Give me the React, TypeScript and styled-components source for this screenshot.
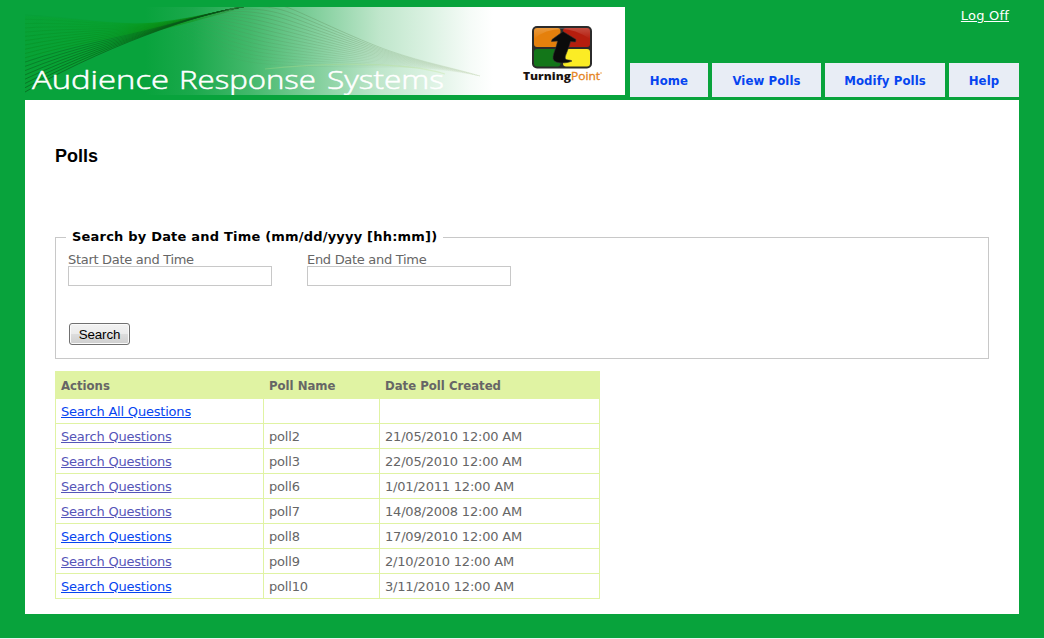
import React from "react";
import styled, { createGlobalStyle } from "styled-components";

const GREEN = "#08a33c";
const LIME = "#e0f3a3";
const CONDENSED = '"DejaVu Sans Condensed", "DejaVu Sans", sans-serif';

const GlobalStyle = createGlobalStyle`
  * { box-sizing: border-box; }
  html { background: #f0f0f0; }
  body {
    margin: 0;
    color: #666;
    font: 13px/16px Verdana, "DejaVu Sans", sans-serif;
    overflow: hidden;
  }
`;

const Page = styled.div`
  height: 638px;
  padding: 7px 25px 24px;
  background: ${GREEN};
  display: flex;
  flex-direction: column;
`;

const Header = styled.header`
  display: flex;
  height: 93px;
`;

const Banner = styled.svg`
  display: block;
  width: 600px;
  height: 88px;
  flex: none;
`;

const HeaderSide = styled.div`
  flex: 1;
  display: flex;
  flex-direction: column;
  justify-content: space-between;
  align-items: flex-end;
  padding-bottom: 3px;
`;

const LogOff = styled.a`
  color: #fff;
  margin-right: 10px;
  margin-top: 1px;
  letter-spacing: 0.2px;
  text-decoration: underline;
`;

const Nav = styled.nav`
  display: flex;
  gap: 4px;
`;

const Tab = styled.a<{ $w: number }>`
  width: ${(p) => p.$w}px;
  height: 34px;
  padding-top: 1px;
  background: #e8edf5;
  color: #0645f0;
  font: bold 13px/34px ${CONDENSED};
  font-stretch: condensed;
  letter-spacing: 0.1px;
  text-align: center;
  white-space: nowrap;
`;

const Content = styled.main`
  flex: 1;
  background: #fff;
  padding: 46px 30px 0;
`;

const Title = styled.h1`
  margin: 0 0 63px;
  color: #000;
  font: bold 18px/20px "Liberation Sans", Arial, sans-serif;
`;

const SearchBox = styled.fieldset`
  margin: 0 0 12px;
  padding: 0 12px;
  height: 130px;
  border: 1px solid #c8c8c8;
`;

const Legend = styled.legend`
  margin-left: -2px;
  padding: 0 6px;
  width: 377px;
  height: 16px;
  color: #000;
  font-weight: bold;
  letter-spacing: 0.2px;
  white-space: nowrap;
`;

const Fields = styled.div`
  display: flex;
  gap: 35px;
  margin-top: 8px;
`;

const Field = styled.label`
  display: flex;
  flex-direction: column;
  width: 204px;
  line-height: 13px;
  letter-spacing: -0.3px;
`;

const Input = styled.input`
  height: 20px;
  border: 1px solid #c8c8c8;
  background: #fff;
  padding: 1px 4px;
  margin: 0;
  outline: none;
`;

const Button = styled.button`
  display: block;
  width: 61px;
  height: 22px;
  margin: 37px 0 0 1px;
  padding: 1px 0 0;
  border: 1px solid #707070;
  border-radius: 3px;
  box-shadow: inset 0 0 0 1px #fafafa;
  background: linear-gradient(#f2f2f2, #ebebeb 50%, #dddddd 50%, #cfcfcf);
  color: #000;
  font: 13.33px/19px "Liberation Sans", Arial, sans-serif;
  letter-spacing: -0.1px;
`;

const Table = styled.table`
  width: 545px;
  table-layout: fixed;
  border-collapse: separate;
  border-spacing: 0;
  border-left: 1px solid ${LIME};
  letter-spacing: -0.2px;
`;

const Th = styled.th<{ $w: number }>`
  width: ${(p) => p.$w}px;
  height: 28px;
  padding: 1px 5px 0;
  background: ${LIME};
  font: bold 13px/16px ${CONDENSED};
  font-stretch: condensed;
  letter-spacing: 0;
  text-align: left;
`;

const Td = styled.td`
  height: 25px;
  padding: 2px 5px 0;
  border-right: 1px solid ${LIME};
  border-bottom: 1px solid ${LIME};
`;

const Action = styled.a<{ $visited?: boolean }>`
  color: ${(p) => (p.$visited ? "#5555b8" : "#0645f0")};
  text-decoration: underline;
`;

const rows = [
  { name: "poll2", date: "21/05/2010 12:00 AM", visited: true },
  { name: "poll3", date: "22/05/2010 12:00 AM", visited: true },
  { name: "poll6", date: "1/01/2011 12:00 AM", visited: true },
  { name: "poll7", date: "14/08/2008 12:00 AM", visited: true },
  { name: "poll8", date: "17/09/2010 12:00 AM", visited: false },
  { name: "poll9", date: "2/10/2010 12:00 AM", visited: true },
  { name: "poll10", date: "3/11/2010 12:00 AM", visited: false },
];

const mix = (a: number, b: number, t: number) => a + (b - a) * t;

function Waves() {
  const left = Array.from({ length: 19 }, (_, i) => {
    const t = i / 18;
    return (
      <path
        key={"l" + i}
        d={`M0 ${mix(8, 85, t)} C48 ${mix(10, 57, t)} 96 ${mix(20, 37, t)} 135 ${mix(15, 23, t)} S 195 4 222 -1`}
        stroke={t > 0.6 ? "#085218" : "#0a7c12"}
        strokeOpacity={mix(0.08, 0.75, t)}
      />
    );
  });
  const right = Array.from({ length: 17 }, (_, i) => {
    const t = i / 16;
    return (
      <path
        key={"r" + i}
        d={`M${mix(205, 140, t)} ${mix(2, 22, t)} C${mix(230, 170, t)} ${mix(-6, 38, t)} ${mix(250, 195, t)} ${mix(-4, 50, t)} ${mix(264, 225, t)} ${mix(1, 55, t)} S 330 ${mix(32, 60, t)} 365 ${mix(44, 60, t)} S 430 ${mix(61, 64, t)} 455 69`}
        stroke="url(#thread)"
        strokeOpacity={mix(0.9, 0.25, t)}
      />
    );
  });
  return (
    <g fill="none" strokeWidth="0.8">
      <path
        d="M0 9 C48 10 96 20 135 15 S 195 4 222 -1 C195 8 160 17 135 23 C96 37 48 57 0 85Z"
        fill="url(#glow)"
      />
      {left}
      {right}
      <path d="M240 62 C290 56 380 54 420 67" stroke="#b9e08a" strokeOpacity="0.3" strokeWidth="1.2" />
    </g>
  );
}

function TurningPoint() {
  return (
    <g>
      <rect x="507" y="19" width="60" height="42.5" rx="5" fill="#2b2b2b" />
      <rect x="509" y="21" width="26.500" height="19" rx="3" fill="#e5800c" />
      <rect x="538" y="21" width="27" height="19" rx="3" fill="#b51e0e" />
      <rect x="509" y="42" width="26.500" height="17.500" rx="3" fill="#137619" />
      <rect x="538" y="42" width="27" height="17.500" rx="3" fill="#fbec25" />
      <path d="M509 32 V24 Q509 21 512 21 H562 Q565 21 565 24 V32 Q550 22 537 22 Q520 22 509 32Z" fill="url(#shine)" />
      <path
        d="M538 24.500 L551 32.500 L550.500 35 L545.500 34.500 C543.500 43 539 50 540.500 52 C542 53.500 545 52.500 547 54 C542 56.500 531 57 528.500 53 C526.500 49 531.500 41 532.500 34 L526.500 34.500 L527 32.500 Z"
        fill="#0b0b0b"
        stroke="#333"
        strokeWidth="0.6"
      />
      <g fontFamily='"Open Sans", "Noto Sans", sans-serif' fontSize="10.500">
        <text x="498" y="73" fontWeight="800" fill="#1b1310" textLength="48" lengthAdjust="spacingAndGlyphs">Turning</text>
        <text x="546" y="73" fontWeight="500" fill="#e5831b" stroke="#e5831b" strokeWidth="0.3" textLength="29" lengthAdjust="spacingAndGlyphs">Point</text>
      </g>
      <circle cx="576" cy="66" r="0.7" fill="#e5831b" />
    </g>
  );
}

const words = [
  { text: "Audience", x: 7, w: 137 },
  { text: "Response", x: 154, w: 137 },
  { text: "Systems", x: 302, w: 117 },
];

export default function App() {
  return (
    <>
      <GlobalStyle />
      <Page>
        <Header>
          <Banner viewBox="0 0 600 88">
            <defs>
              <linearGradient id="fade" gradientUnits="userSpaceOnUse" x1="0" y1="0" x2="600" y2="0">
                <stop offset="0.2" stopColor={GREEN} />
                <stop offset="0.28" stopColor="#1ba94c" />
                <stop offset="0.375" stopColor="#43b86b" />
                <stop offset="0.475" stopColor="#7ccd98" />
                <stop offset="0.59" stopColor="#bfe6cb" />
                <stop offset="0.675" stopColor="#dcf2e3" />
                <stop offset="0.74" stopColor="#f5fbf7" />
                <stop offset="0.78" stopColor="#fff" />
              </linearGradient>
              <linearGradient id="glow" gradientUnits="userSpaceOnUse" x1="0" y1="0" x2="222" y2="0">
                <stop offset="0" stopColor="#06a020" stopOpacity="0.2" />
                <stop offset="0.4" stopColor="#06a018" stopOpacity="0.35" />
                <stop offset="0.6" stopColor="#0a9a08" stopOpacity="0.6" />
                <stop offset="1" stopColor="#1a7a20" stopOpacity="0.3" />
              </linearGradient>
              <linearGradient id="thread" gradientUnits="userSpaceOnUse" x1="140" y1="0" x2="455" y2="0">
                <stop offset="0" stopColor="#3f9a50" stopOpacity="0.1" />
                <stop offset="0.3" stopColor="#4f9a5c" stopOpacity="0.8" />
                <stop offset="0.6" stopColor="#7fae82" stopOpacity="0.8" />
                <stop offset="1" stopColor="#c8d8b8" stopOpacity="0.1" />
              </linearGradient>
              <linearGradient id="shine" x1="0" y1="0" x2="0" y2="1">
                <stop offset="0" stopColor="#fff" stopOpacity="0.2" />
                <stop offset="1" stopColor="#fff" stopOpacity="0" />
              </linearGradient>
            </defs>
            <rect width="600" height="88" fill="url(#fade)" />
            <Waves />
            <g
              fill="#fff"
              stroke="#fff"
              strokeWidth="0.5"
              fontFamily='"Open Sans", "Noto Sans", sans-serif'
              fontWeight="300"
              fontSize="25"
            >
              {words.map((word) => (
                <text key={word.text} x={word.x} y="81.5" textLength={word.w} lengthAdjust="spacingAndGlyphs">
                  {word.text}
                </text>
              ))}
            </g>
            <TurningPoint />
          </Banner>
          <HeaderSide>
            <LogOff>Log Off</LogOff>
            <Nav>
              <Tab $w={78}>Home</Tab>
              <Tab $w={109}>View Polls</Tab>
              <Tab $w={120}>Modify Polls</Tab>
              <Tab $w={70}>Help</Tab>
            </Nav>
          </HeaderSide>
        </Header>
        <Content>
          <Title>Polls</Title>
          <SearchBox>
            <Legend>Search by Date and Time (mm/dd/yyyy [hh:mm])</Legend>
            <Fields>
              <Field>Start Date and Time<Input /></Field>
              <Field>End Date and Time<Input /></Field>
            </Fields>
            <Button>Search</Button>
          </SearchBox>
          <Table>
            <thead>
              <tr>
                <Th $w={208}>Actions</Th>
                <Th $w={116}>Poll Name</Th>
                <Th $w={220}>Date Poll Created</Th>
              </tr>
            </thead>
            <tbody>
              <tr>
                <Td><Action>Search All Questions</Action></Td>
                <Td />
                <Td />
              </tr>
              {rows.map((r) => (
                <tr key={r.name}>
                  <Td><Action $visited={r.visited}>Search Questions</Action></Td>
                  <Td>{r.name}</Td>
                  <Td>{r.date}</Td>
                </tr>
              ))}
            </tbody>
          </Table>
        </Content>
      </Page>
    </>
  );
}
